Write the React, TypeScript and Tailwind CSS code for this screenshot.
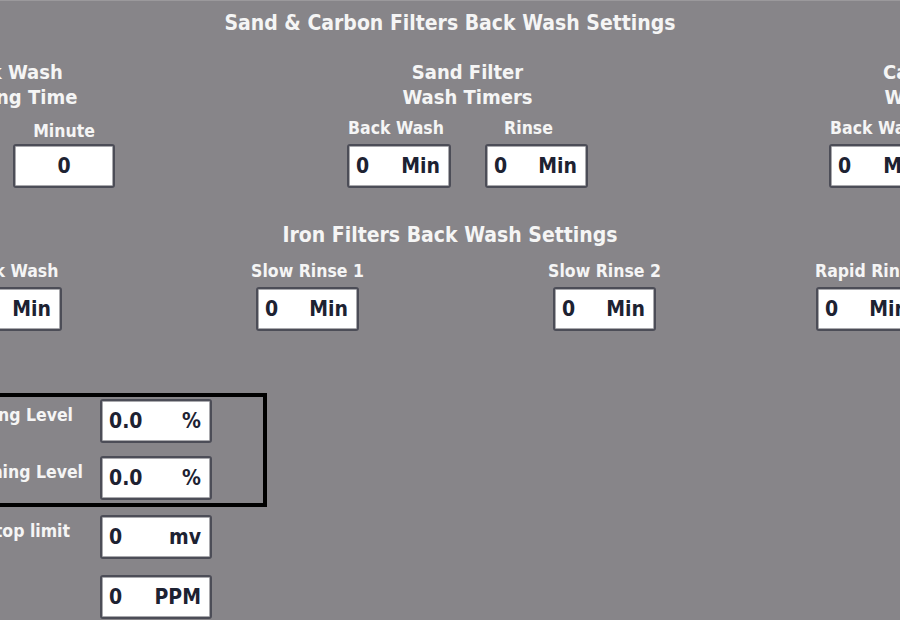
const face = "font-['DejaVu_Sans_Condensed','DejaVu_Sans',sans-serif]";

interface FieldProps {
  value: string;
  unit?: string;
  w: string;
  center?: boolean;
}

// Campo numérico estilo painel HMI
function Field({ value, unit, w, center }: FieldProps) {
  return (
    <div className={`${w} h-[44px] shrink-0 rounded-[3px] border-2 border-[#4c4d57] bg-[#a9a9ad] p-[1px]`}>
      <div
        className={`flex h-full items-center bg-white px-[6px] text-[21px] leading-none text-[#1d2232] ${
          center ? "justify-center" : "justify-between"
        }`}
      >
        <span>{value}</span>
        {unit && <span className="pr-[2px]">{unit}</span>}
      </div>
    </div>
  );
}

// Rótulo centrado sobre o campo (pode passar da largura do campo)
function Labeled({ label, children, lcls = "" }: { label: string; children: React.ReactNode; lcls?: string }) {
  return (
    <div className="flex shrink-0 flex-col items-center">
      <div className={`flex h-[20px] w-0 justify-center text-[17.5px] leading-[20px] ${lcls}`}>
        <span className="whitespace-nowrap">{label}</span>
      </div>
      <div className="mt-[6px]">{children}</div>
    </div>
  );
}

function TimerGroup({ title1, title2 }: { title1: string; title2: string }) {
  return (
    <div className="flex w-[241px] shrink-0 flex-col">
      <div className="text-center text-[20px] leading-[25px] whitespace-nowrap">
        <div>{title1}</div>
        <div>{title2}</div>
      </div>
      <div className="mt-[8px] flex gap-[34px]">
        <Labeled label="Back Wash" lcls="-translate-x-[3px]">
          <Field w="w-[104px]" value="0" unit="Min" />
        </Labeled>
        <Labeled label="Rinse" lcls="-translate-x-[8px]">
          <Field w="w-[103px]" value="0" unit="Min" />
        </Labeled>
      </div>
    </div>
  );
}

function LevelRow({ label, lw, gap, value, unit }: { label: string; lw: string; gap: string; value: string; unit: string }) {
  return (
    <div className="flex items-start">
      <div className={`${lw} flex shrink-0 justify-end pt-[6px] text-[17.5px] leading-[20px]`}>
        <span className="whitespace-nowrap">{label}</span>
      </div>
      <div className={gap}>
        <Field w="w-[112px]" value={value} unit={unit} />
      </div>
    </div>
  );
}

export default function App() {
  return (
    <div className={`${face} h-[620px] w-[900px] overflow-hidden border-t border-[#9b999c] bg-[#878589] font-bold text-[#f5f5f5]`}>
      <div className="flex h-[43px] items-center justify-center pt-[2px] text-[21px] whitespace-nowrap">
        Sand &amp; Carbon Filters Back Wash Settings
      </div>

      {/* Sand / carbon timers */}
      <div className="mt-[16px] flex items-start">
        <div className="ml-[-105px] flex w-[226px] shrink-0 flex-col">
          <div className="text-center text-[20px] leading-[25px] whitespace-nowrap">
            <div>Back Wash</div>
            <div>Starting Time</div>
          </div>
          <div className="mt-[8px] flex justify-end gap-[20px] pr-[6px]">
            <Labeled label="Hour">
              <Field w="w-[102px]" value="0" center />
            </Labeled>
            <Labeled label="Minute" lcls="translate-y-[3px]">
              <Field w="w-[102px]" value="0" center />
            </Labeled>
          </div>
        </div>
        <div className="ml-[226px]">
          <TimerGroup title1="Sand Filter" title2="Wash Timers" />
        </div>
        <div className="ml-[241px]">
          <TimerGroup title1="Carbon Filter" title2="Wash Timers" />
        </div>
      </div>

      {/* Iron filters */}
      <div className="mt-[35px] text-center text-[21px] leading-[25px] whitespace-nowrap">
        Iron Filters Back Wash Settings
      </div>
      <div className="mt-[13px] flex items-start">
        <div className="ml-[-41px]">
          <Labeled label="Back Wash">
            <Field w="w-[103px]" value="0" unit="Min" />
          </Labeled>
        </div>
        <div className="ml-[194px]">
          <Labeled label="Slow Rinse 1">
            <Field w="w-[103px]" value="0" unit="Min" />
          </Labeled>
        </div>
        <div className="ml-[194px]">
          <Labeled label="Slow Rinse 2">
            <Field w="w-[103px]" value="0" unit="Min" />
          </Labeled>
        </div>
        <div className="ml-[160px]">
          <Labeled label="Rapid Rinse">
            <Field w="w-[103px]" value="0" unit="Min" />
          </Labeled>
        </div>
      </div>

      {/* Levels */}
      <div className="ml-[-30px] mt-[62px] flex w-[297px] flex-col gap-[13px] border-4 border-black pt-[2px] pb-[3px]">
        <LevelRow label="Low Filling Level" lw="w-[99px]" gap="ml-[27px]" value="0.0" unit="%" />
        <LevelRow label="High Draining Level" lw="w-[109px]" gap="ml-[17px]" value="0.0" unit="%" />
      </div>

      <div className="mt-[8px]">
        <LevelRow label="ORP Stop limit" lw="w-[70px]" gap="ml-[30px]" value="0" unit="mv" />
      </div>
      <div className="mt-[16px] flex">
        <div className="ml-[100px]">
          <Field w="w-[112px]" value="0" unit="PPM" />
        </div>
      </div>
    </div>
  );
}
